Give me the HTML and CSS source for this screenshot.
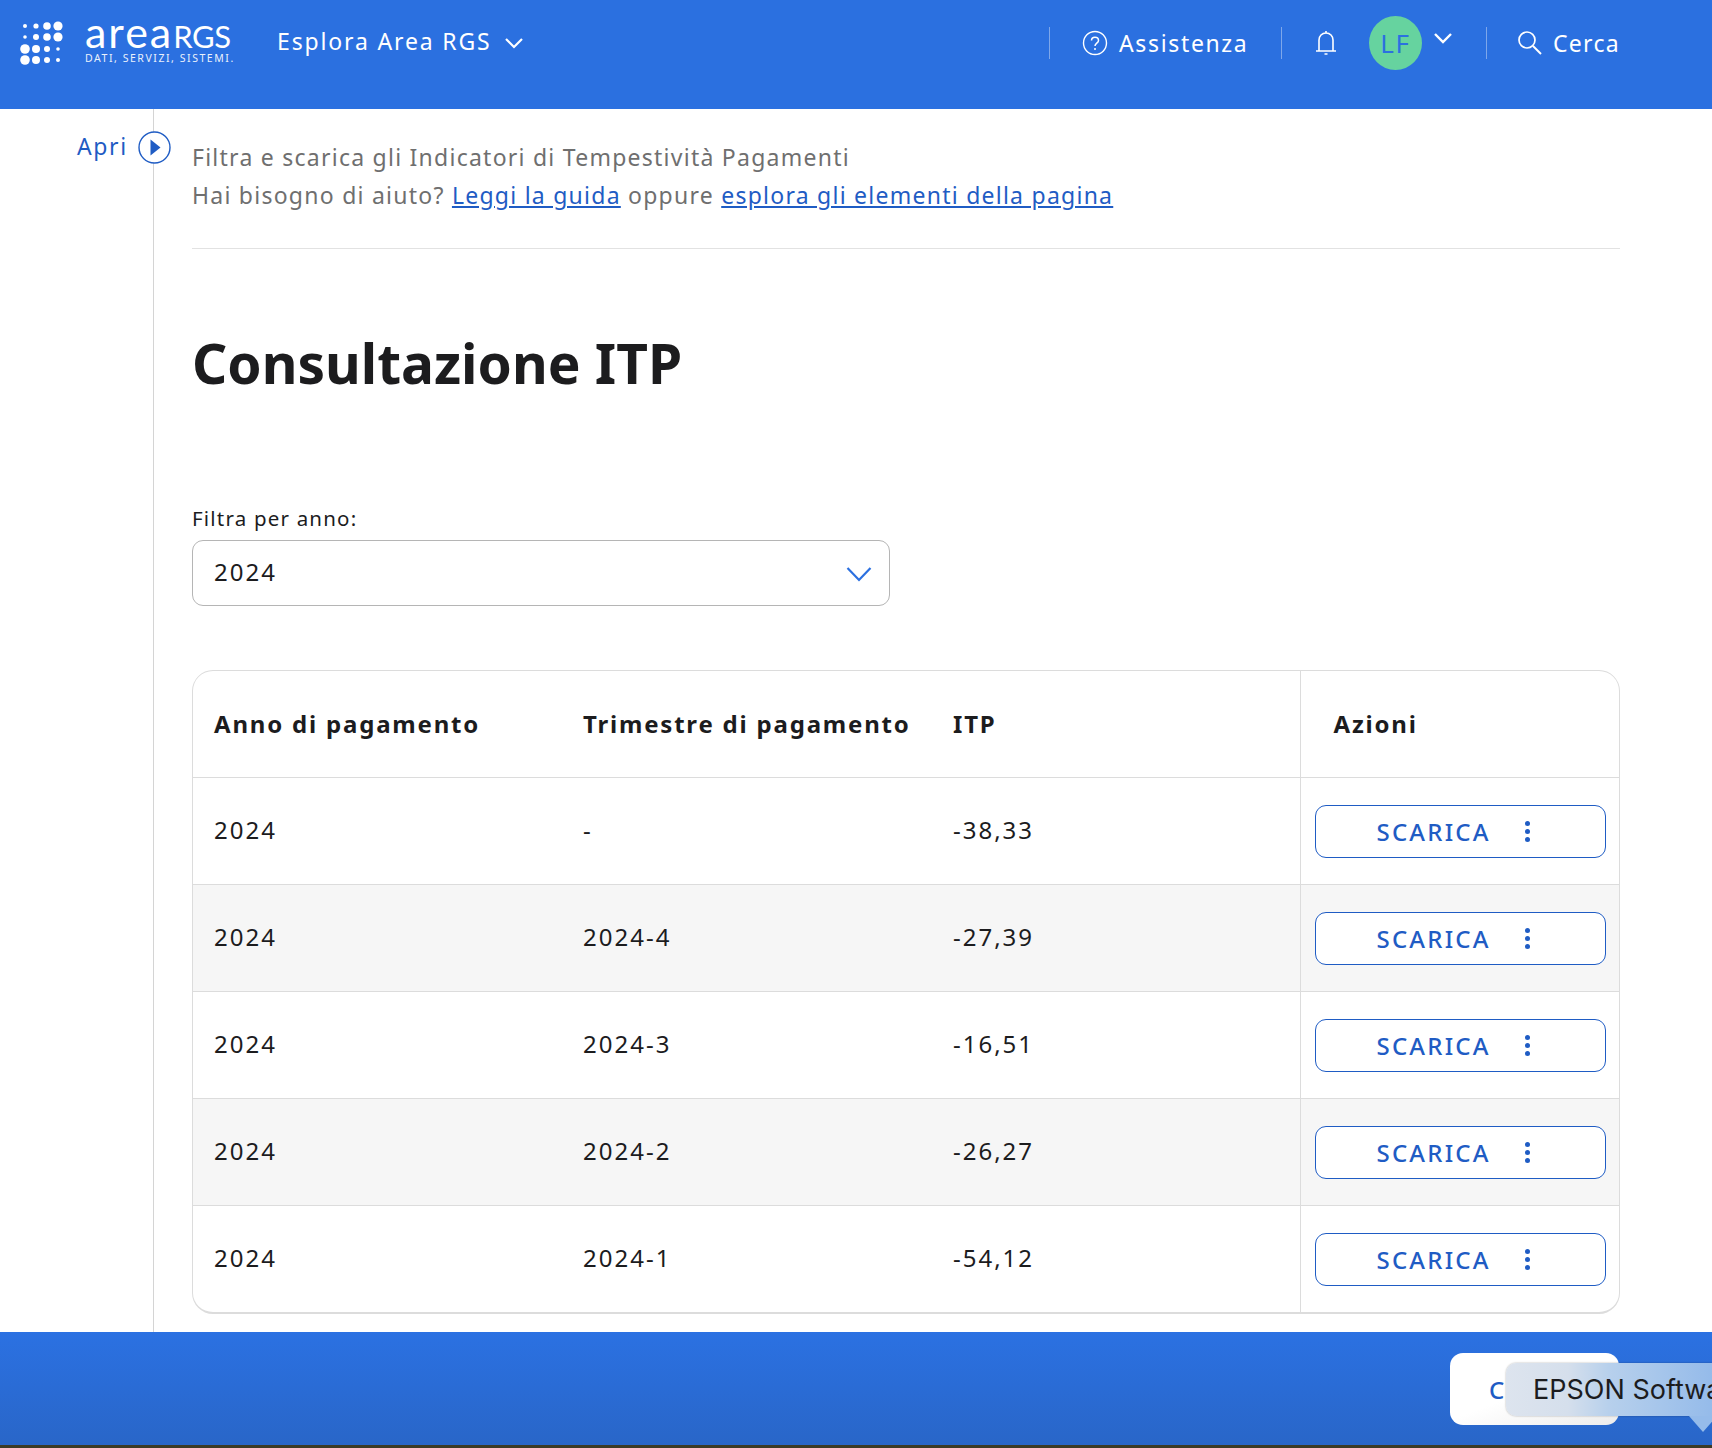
FILE: index.html
```html
<!DOCTYPE html>
<html lang="it">
<head>
<meta charset="utf-8">
<title>Consultazione ITP</title>
<link rel="stylesheet" href="styles.css">
</head>
<body>
<header class="topbar">
  <a class="logo">
    <svg class="logo-dots" width="48" height="46" viewBox="0 0 48 46">
      <g fill="#fff">
        <circle cx="5" cy="5" r="2"/><circle cx="16" cy="5" r="2.6"/><circle cx="27" cy="5" r="3.8"/><circle cx="38" cy="5" r="4.6"/>
        <circle cx="5" cy="16" r="1.8"/><circle cx="16" cy="16" r="3"/><circle cx="27" cy="16" r="3.8"/><circle cx="38" cy="16" r="4.6"/>
        <circle cx="5" cy="28" r="4.8"/><circle cx="16" cy="28" r="4"/><circle cx="27" cy="28" r="3"/><circle cx="38" cy="28" r="1.8"/>
        <circle cx="5" cy="39" r="4.8"/><circle cx="16" cy="39" r="4"/><circle cx="27" cy="39" r="3"/><circle cx="38" cy="39" r="2"/>
      </g>
    </svg>
    <span class="logo-text">
      <span class="logo-name"><span class="logo-area">area</span><span class="logo-rgs">RGS</span></span>
      <span class="logo-tag">DATI, SERVIZI, SISTEMI.</span>
    </span>
  </a>
  <a class="explore">Esplora Area RGS
    <svg width="20" height="12" viewBox="0 0 20 12"><path d="M2 2l8 8 8-8" fill="none" stroke="#fff" stroke-width="2.2"/></svg>
  </a>
  <div class="top-actions">
    <a class="top-item help">
      <svg width="26" height="26" viewBox="0 0 26 26"><circle cx="13" cy="13" r="11.5" fill="none" stroke="#fff" stroke-width="1.4"/><path d="M9.5 10.500c0-2 1.500-3.300 3.500-3.300s3.500 1.300 3.500 3.200c0 2.600-3.500 2.900-3.500 5.600" fill="none" stroke="#fff" stroke-width="1.5"/><circle cx="13" cy="19" r="1" fill="#fff"/></svg>
      Assistenza
    </a>
    <a class="top-item bell">
      <svg width="22" height="28" viewBox="0 0 22 28"><path d="M1 22h20M4 22V11c0-4 3-7 7-7s7 3 7 7v11M11 4V2M9.500 25h3" fill="none" stroke="#fff" stroke-width="1.600"/></svg>
    </a>
    <a class="top-item user">
      <span class="avatar">LF</span>
      <svg class="user-chev" width="20" height="12" viewBox="0 0 20 12"><path d="M2 2l8 8 8-8" fill="none" stroke="#fff" stroke-width="2.400"/></svg>
    </a>
    <a class="top-item search">
      <svg width="25" height="25" viewBox="0 0 25 25"><circle cx="10" cy="10" r="8" fill="none" stroke="#fff" stroke-width="1.700"/><path d="M16 16l8 8" stroke="#fff" stroke-width="1.900"/></svg>
      Cerca
    </a>
  </div>
</header>

<div class="page">
  <aside class="side">
    <span class="side-label">Apri</span>
    <svg class="side-btn" width="33" height="33" viewBox="0 0 33 33"><circle cx="16.500" cy="16.500" r="15.500" fill="#fff" stroke="#1f5cc4" stroke-width="1.400"/><path d="M12.500 8.500l10 8-10 8z" fill="#1f5cc4"/></svg>
  </aside>
  <main class="content">
    <div class="intro">
      <p>Filtra e scarica gli Indicatori di Tempestività Pagamenti</p>
      <p>Hai bisogno di aiuto? <a href="#">Leggi la guida</a> oppure <a href="#">esplora gli elementi della pagina</a></p>
    </div>
    <h1>Consultazione ITP</h1>
    <label class="filter-label">Filtra per anno:</label>
    <div class="select">
      <span>2024</span>
      <svg width="26" height="16" viewBox="0 0 26 16"><path d="M1.500 2l11.500 12L24.500 2" fill="none" stroke="#2b70e0" stroke-width="2.200"/></svg>
    </div>
    <div class="table-wrap">
      <table>
        <thead>
          <tr><th>Anno di pagamento</th><th>Trimestre di pagamento</th><th>ITP</th><th class="act">Azioni</th></tr>
        </thead>
        <tbody>
          <tr><td>2024</td><td>-</td><td>-38,33</td><td class="act"><button class="dl">SCARICA<span class="kebab"><i></i><i></i><i></i></span></button></td></tr>
          <tr><td>2024</td><td>2024-4</td><td>-27,39</td><td class="act"><button class="dl">SCARICA<span class="kebab"><i></i><i></i><i></i></span></button></td></tr>
          <tr><td>2024</td><td>2024-3</td><td>-16,51</td><td class="act"><button class="dl">SCARICA<span class="kebab"><i></i><i></i><i></i></span></button></td></tr>
          <tr><td>2024</td><td>2024-2</td><td>-26,27</td><td class="act"><button class="dl">SCARICA<span class="kebab"><i></i><i></i><i></i></span></button></td></tr>
          <tr><td>2024</td><td>2024-1</td><td>-54,12</td><td class="act"><button class="dl">SCARICA<span class="kebab"><i></i><i></i><i></i></span></button></td></tr>
        </tbody>
      </table>
    </div>
  </main>
</div>

<footer class="bottom">
  <button class="cta">C</button>
  <div class="tip"><span class="tip-text">EPSON Software</span><span class="tip-arrow"></span></div>
</footer>
<div class="strip"></div>
</body>
</html>
```

FILE: styles.css
```css
* { box-sizing: border-box; }
html, body { margin: 0; height: 100%; }
body {
  height: 1448px;
  overflow: hidden;
  display: flex;
  flex-direction: column;
  font-family: "Noto Sans", "Open Sans", sans-serif;
  color: #1c1c1e;
  background: #fff;
}
a { color: inherit; text-decoration: none; }

.topbar {
  height: 109px;
  flex: none;
  background: #2b70e0;
  color: #fff;
  display: flex;
  align-items: flex-start;
  padding: 16px 92px 0 20px;
}
.logo { display: flex; align-items: flex-start; margin-top: 4px; }
.logo-dots { margin-top: 1px; }
.logo-text { display: flex; flex-direction: column; margin-left: 17px; width: 150px; }
.logo-name { font-family: "Lato", sans-serif; line-height: 33px; height: 33px; margin-top: -5px; white-space: nowrap; }
.logo-area { font-size: 43px; letter-spacing: 2px; }
.logo-rgs { font-size: 31px; letter-spacing: -.4px; }
.logo-tag { font-size: 10.500px; letter-spacing: 1.550px; line-height: 14px; margin-top: 3px; opacity: .9; white-space: nowrap; }
.explore { display: flex; align-items: center; gap: 12px; font-size: 23px; letter-spacing: 1.850px; margin: 8px 0 0 42px; line-height: 34px; }
.explore svg { margin-top: 3px; }

.top-actions { margin-left: auto; display: flex; align-items: flex-start; }
.top-item { display: flex; align-items: center; font-size: 23px; letter-spacing: 1.650px; height: 32px; margin-top: 11px; }
.help { border-left: 1px solid #7ea7ea; padding-left: 32px; gap: 11px; width: 232px; }
.help svg, .search svg { margin-top: -1px; }
.bell { border-left: 1px solid #7ea7ea; padding-left: 33px; width: 88px; }
.user { width: 117px; position: relative; }
.avatar {
  width: 53px; height: 54px; border-radius: 50%;
  background: #66d39f; color: #2b70e0;
  display: flex; align-items: center; justify-content: center;
  font-size: 26px; flex: none;
}
.user-chev { margin: -10px 0 0 11px; }
.search { border-left: 1px solid #7ea7ea; padding-left: 30px; gap: 11px; letter-spacing: 1.300px; }

.page { flex: 1; display: flex; min-height: 0; }
.side {
  width: 154px; flex: none;
  border-right: 1px solid #d4d4d4;
  color: #1f5cc4;
  font-size: 23px;
  position: relative;
}
.side-label { position: absolute; left: 77px; top: 21px; line-height: 32px; letter-spacing: 1.600px; }
.side-btn { position: absolute; left: 138px; top: 22px; }

.content { flex: 1; padding: 29px 92px 0 38px; min-width: 0; }
.intro { color: #6f6f6f; font-size: 23px; letter-spacing: 1.250px; line-height: 38px; padding-bottom: 34px; border-bottom: 1px solid #e2e2e2; }
.intro p { margin: 0; }
.intro a { color: #1f5cc4; text-decoration: underline; }
h1 { margin: 80px 0 0; font-size: 55px; line-height: 68px; font-weight: 700; color: #1c1c1e; letter-spacing: 0; }
.filter-label { display: block; margin-top: 108px; font-size: 20.500px; line-height: 26px; letter-spacing: 1.200px; }
.select {
  margin-top: 9px; width: 698px; height: 66px;
  border: 1px solid #b5b5b5; border-radius: 11px;
  display: flex; align-items: center; justify-content: space-between;
  padding: 0 17px 0 21px;
  font-size: 24px; letter-spacing: 2px;
}
.select span { padding-bottom: 3px; }
.select svg { margin-top: 2px; }
.table-wrap { margin-top: 64px; border: 1px solid #dcdcdc; border-bottom-width: 2px; border-radius: 21px; overflow: hidden; width: 1428px; }
table { width: 100%; border-collapse: collapse; table-layout: fixed; font-size: 24px; letter-spacing: 2px; }
th, td { padding: 0 0 3px 21px; text-align: left; height: 107px; border-top: 1px solid #dcdcdc; }
thead th { border-top: 0; font-weight: 700; height: 106px; letter-spacing: 1.800px; padding-bottom: 0; }
th:nth-child(1), td:nth-child(1) { width: 369px; }
th:nth-child(2), td:nth-child(2) { width: 370px; }
th:nth-child(3), td:nth-child(3) { width: 368px; }
th.act { padding-left: 33px; border-left: 1px solid #dcdcdc; }
td.act { padding: 1px 13px 0 14px; border-left: 1px solid #dcdcdc; }
tbody tr:nth-child(even) { background: #f6f6f6; }
.dl {
  width: 100%; height: 53px;
  background: #fff; border: 1px solid #1f5cc4; border-radius: 11px;
  color: #1f5cc4; font: inherit; font-weight: 500; letter-spacing: 2.200px;
  display: flex; align-items: center;
  padding: 0 0 0 61px;
}
.kebab { display: flex; flex-direction: column; gap: 3px; margin-left: 34px; }
.kebab i { width: 5px; height: 5px; border-radius: 50%; background: #1f5cc4; display: block; }

.bottom {
  height: 113px; flex: none;
  background: linear-gradient(#2b71e2, #2966c8);
  position: relative;
  display: flex; justify-content: flex-end;
  padding: 21px 93px 0 0;
}
.cta {
  width: 169px; height: 72px; border: 0; border-radius: 13px;
  background: linear-gradient(160deg, #fff 50%, #ececec);
  color: #1f5cc4; font: inherit; font-weight: 500; font-size: 24px; text-align: left; padding: 0 0 0 39px;
}
.tip {
  position: absolute; left: 1506px; top: 31px; right: 0; height: 53px;
  border-radius: 10px 0 0 10px;
  background: linear-gradient(90deg, #dde4ee 0%, #d5dfec 30%, #b7d0ec 50%, #95bbea 100%);
  box-shadow: 0 0 2px rgba(0,0,0,.35);
  font-family: "Inter", sans-serif; font-size: 27px; line-height: 53px; padding-left: 27px;
  color: #1c1c1e;
}
.tip-text { display: block; width: 179px; overflow: hidden; white-space: nowrap; }
.tip-arrow {
  position: absolute; left: 183px; top: 53px; width: 0; height: 0;
  border-left: 14px solid transparent; border-right: 14px solid transparent; border-top: 16px solid #95bbea;
}
.strip { height: 3px; flex: none; background: #3b3a26; }
```
